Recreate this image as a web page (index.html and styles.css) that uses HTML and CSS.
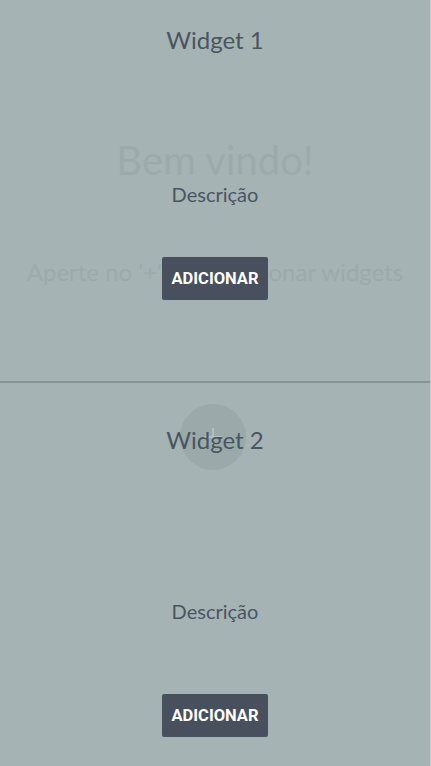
FILE: index.html
```html
<!DOCTYPE html>
<html lang="pt">
<head>
<meta charset="utf-8">
<link rel="stylesheet" href="styles.css">
</head>
<body>
<div class="screen">
  <div class="welcome">
    <h1 class="welcome-title">Bem vindo!</h1>
    <p class="welcome-hint">Aperte no '+' para adicionar widgets</p>
    <div class="fab"><span class="fab-v"></span><span class="fab-h"></span></div>
  </div>
  <div class="widgets">
    <section class="widget widget-first">
      <h2 class="widget-title">Widget 1</h2>
      <p class="widget-desc">Descrição</p>
      <button class="widget-btn">ADICIONAR</button>
    </section>
    <section class="widget widget-second">
      <h2 class="widget-title">Widget 2</h2>
      <p class="widget-desc">Descrição</p>
      <button class="widget-btn">ADICIONAR</button>
    </section>
  </div>
</div>
</body>
</html>
```
FILE: styles.css
```css
html, body {
  margin: 0;
  padding: 0;
  height: 100%;
  background: #c3cbcc;
  overflow: hidden;
}
.screen {
  position: relative;
  width: 430px;
  height: 766px;
  background: #a6b3b4;
  font-family: Lato, "Noto Sans", sans-serif;
}
.welcome {
  position: absolute;
  inset: 0;
  display: flex;
  flex-direction: column;
  align-items: center;
}
.welcome-title {
  margin: 134px 0 0;
  font-size: 40px;
  font-weight: 400;
  line-height: 52px;
  color: #9daaab;
}
.welcome-hint {
  margin: 71px 0 0;
  font-size: 24px;
  line-height: 30px;
  color: #9daaab;
}
.fab {
  position: absolute;
  left: 180px;
  top: 404px;
  width: 66px;
  height: 66px;
  border-radius: 50%;
  background: #9ca9aa;
}
.fab-v {
  position: absolute;
  left: 32px;
  top: 24px;
  width: 2px;
  height: 18px;
  background: #b3bebf;
}
.fab-h {
  position: absolute;
  left: 24px;
  top: 32px;
  width: 18px;
  height: 2px;
  background: #b3bebf;
}
.widgets {
  position: relative;
  display: flex;
  flex-direction: column;
}
.widget {
  display: flex;
  flex-direction: column;
  align-items: center;
}
.widget-first {
  height: 381px;
  border-bottom: 2px solid #889493;
}
.widget-title {
  margin: 25px 0 0;
  font-size: 24px;
  font-weight: 400;
  line-height: 30px;
  color: #4a5562;
}
.widget-desc {
  margin: 127px 0 0;
  font-size: 20px;
  line-height: 24px;
  color: #4a5562;
}
.widget-btn {
  margin-top: 51px;
  width: 106px;
  height: 43px;
  padding: 0;
  border: none;
  border-radius: 2px;
  background: #47505c;
  color: #ffffff;
  font-family: Roboto, "Liberation Sans", sans-serif;
  font-weight: 700;
  font-size: 16.5px;
  letter-spacing: 0;
}
.widget-second .widget-title {
  margin-top: 42px;
}
.widget-second .widget-desc {
  margin-top: 144px;
}
.widget-second .widget-btn {
  margin-top: 71px;
}
```
